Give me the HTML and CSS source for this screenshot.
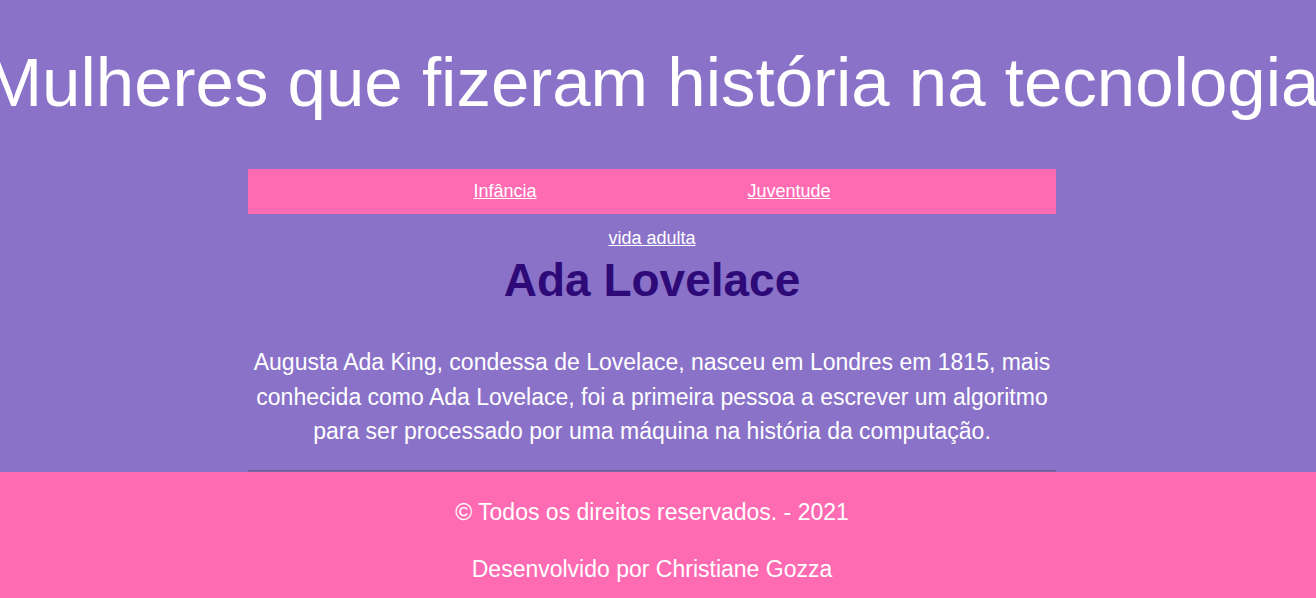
FILE: index.html
```html
<!DOCTYPE html>
<html lang="pt-br">
<head>
<meta charset="utf-8">
<title>Mulheres que fizeram história na tecnologia</title>
<link rel="stylesheet" href="styles.css">
</head>
<body>
<div class="page">
  <header class="header">
    <h1 class="title">Mulheres que fizeram história na tecnologia</h1>
  </header>
  <main class="main">
    <nav class="nav">
      <a class="nav-link" href="#">Infância</a>
      <a class="nav-link" href="#">Juventude</a>
    </nav>
    <div class="sub-link-row"><a class="nav-link" href="#">vida adulta</a></div>
    <h2 class="name">Ada Lovelace</h2>
    <p class="bio">Augusta Ada King, condessa de Lovelace, nasceu em Londres em 1815, mais conhecida como Ada Lovelace, foi a primeira pessoa a escrever um algoritmo para ser processado por uma máquina na história da computação.</p>
    <div class="photo"></div>
  </main>
</div>
<footer class="footer">
  <p class="footer-text">© Todos os direitos reservados. - 2021</p>
  <p class="footer-text">Desenvolvido por Christiane Gozza</p>
</footer>
</body>
</html>
```
FILE: styles.css
```css
html, body {
  margin: 0;
  padding: 0;
}
body {
  background: #8a72c9;
  font-family: "Liberation Sans", Arial, sans-serif;
  color: #fff;
  overflow: hidden;
}
.page {
  margin-right: 12px;
}
.header {
  display: flex;
  justify-content: center;
  padding-top: 48px;
}
.title {
  margin: 0;
  font-size: 69px;
  font-weight: normal;
  line-height: 1;
  white-space: nowrap;
  color: #fff;
}
.main {
  width: 808px;
  margin: 52px auto 0;
  display: flex;
  flex-direction: column;
  align-items: center;
}
.nav {
  width: 100%;
  height: 45px;
  background: #ff6bb3;
  display: flex;
  justify-content: center;
  align-items: center;
  gap: 211px;
}
.nav-link {
  color: #fff;
  font-size: 18px;
  text-decoration: underline;
}
.sub-link-row {
  margin-top: 14px;
}
.name {
  margin: 4px 0 0;
  font-size: 46px;
  font-weight: bold;
  color: #2e0a78;
  line-height: 1.2;
}
.bio {
  margin: 37px 0 0;
  font-size: 23px;
  line-height: 34.5px;
  text-align: center;
}
.photo {
  margin-top: 21px;
  width: 808px;
  height: 200px;
  background: linear-gradient(#6a5a8f, #8a72c9 3px);
}
.footer {
  position: fixed;
  left: 0;
  right: 0;
  bottom: 0;
  height: 126px;
  box-sizing: border-box;
  padding: 28px 12px 0 0;
  background: #ff6bb3;
  display: flex;
  flex-direction: column;
  align-items: center;
  gap: 33px;
}
.footer-text {
  margin: 0;
  font-size: 23px;
  line-height: 24px;
}
```
